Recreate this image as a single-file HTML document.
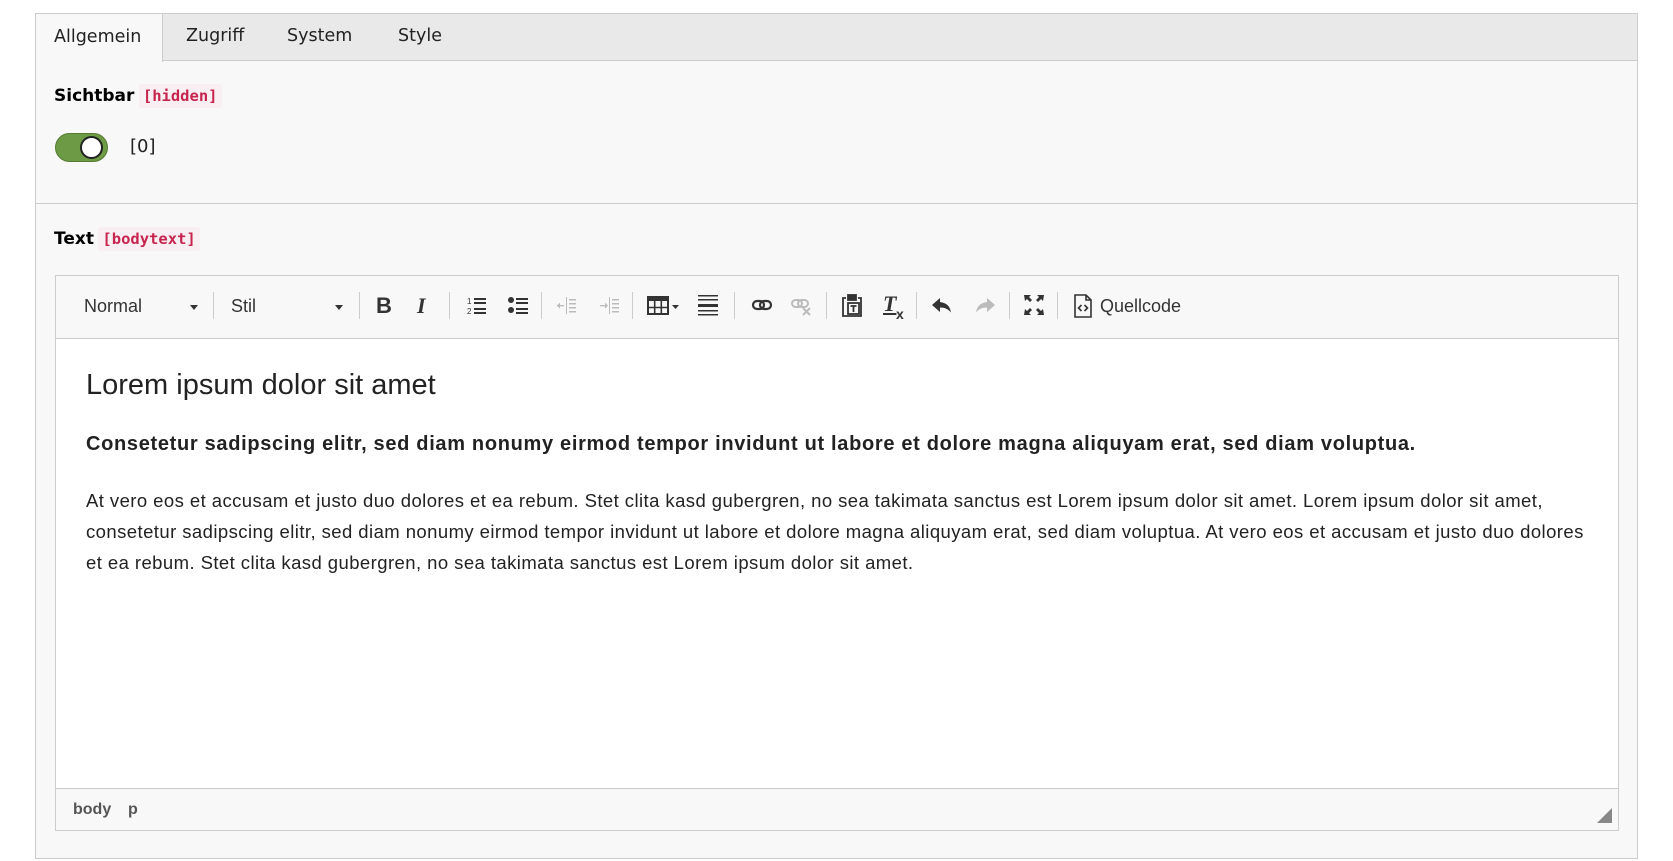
<!DOCTYPE html>
<html><head><meta charset="utf-8"><style>
*{box-sizing:border-box;margin:0;padding:0}
body{width:1673px;height:861px;background:#fff;font-family:"Liberation Sans",Arial,sans-serif;color:#222;position:relative;overflow:hidden}
.abs{position:absolute}
.panel{left:35px;top:13px;width:1603px;height:846px;background:#f8f8f8;border:1px solid #ccc}
.tabbar{left:35px;top:13px;width:1603px;height:48px;background:#e9e9e9;border:1px solid #ccc}
.tab{position:absolute;top:13px;height:48px;line-height:46px;font-size:17.5px;color:#222;font-family:"DejaVu Sans",sans-serif}
.tab.active{background:#f8f8f8;border:1px solid #ccc;border-bottom:none;left:35px;width:128px;padding-left:18px;height:49px}
.lbl{font-weight:bold;font-size:17px;color:#000;font-family:"DejaVu Sans",sans-serif}
.code{font-family:"DejaVu Sans Mono",monospace;font-size:15.5px;color:#c7254e;background:#f9eef1;padding:3px 4px;font-weight:bold;border-radius:3px}
.sep{position:absolute;top:292px;width:1px;height:27px;background:#ccc}
.ic{position:absolute;top:294px}
.editor{left:55px;top:275px;width:1564px;height:556px;border:1px solid #ccc;background:#fff}
.tb{left:56px;top:276px;width:1562px;height:63px;background:#f8f8f8;border-bottom:1px solid #ccc}
.status{left:56px;top:788px;width:1562px;height:42px;background:#f8f8f8;border-top:1px solid #ccc}
.txt{font-size:18px;color:#333;position:absolute;top:294px;line-height:24px}
</style></head><body>
<div class="abs panel"></div>
<div class="abs tabbar"></div>
<div class="tab active">Allgemein</div>
<div class="tab" style="left:186px">Zugriff</div>
<div class="tab" style="left:287px">System</div>
<div class="tab" style="left:398px">Style</div>

<div class="abs" style="left:54px;top:86px;white-space:nowrap"><span class="lbl">Sichtbar</span> <span class="code">[hidden]</span></div>
<div class="abs" style="left:55px;top:133px;width:53px;height:29px;border-radius:15px;background:#6d9a44;border:1px solid #567c33"></div>
<div class="abs" style="left:80px;top:136px;width:23px;height:23px;border-radius:50%;background:#fff;border:2px solid #222"></div>
<div class="abs" style="left:130px;top:136px;font-size:18px;color:#222;font-family:'DejaVu Sans',sans-serif">[0]</div>
<div class="abs" style="left:35px;top:203px;width:1603px;height:1px;background:#ccc"></div>

<div class="abs" style="left:54px;top:229px;white-space:nowrap"><span class="lbl">Text</span> <span class="code">[bodytext]</span></div>

<div class="abs editor"></div>
<div class="abs tb"></div>
<div class="txt" style="left:84px">Normal</div>
<div class="abs" style="left:190px;top:305px;border:4px solid transparent;border-top:5px solid #333"></div>
<div class="sep" style="left:213px"></div>
<div class="txt" style="left:231px">Stil</div>
<div class="abs" style="left:335px;top:305px;border:4px solid transparent;border-top:5px solid #333"></div>
<div class="sep" style="left:359px"></div>
<div class="ic" style="left:376px;font-weight:bold;font-size:22px;color:#333;top:293px">B</div>
<div class="ic" style="left:417px;font-weight:bold;font-style:italic;font-size:22px;color:#333;top:293px;font-family:'Liberation Serif',serif">I</div>
<div class="sep" style="left:449px"></div>
<svg class="ic" style="left:466px" width="22" height="22" viewBox="0 0 22 22" fill="#333"><text x="1" y="10" font-size="8" font-family="Liberation Sans">1</text><text x="1" y="20" font-size="8" font-family="Liberation Sans">2</text><rect x="8" y="4" width="12" height="2"/><rect x="8" y="8" width="12" height="2"/><rect x="8" y="14" width="12" height="2"/><rect x="8" y="18" width="12" height="2"/></svg>
<svg class="ic" style="left:507px" width="22" height="22" viewBox="0 0 22 22" fill="#333"><circle cx="4" cy="6" r="3"/><circle cx="4" cy="16" r="3"/><rect x="9" y="4" width="12" height="2"/><rect x="9" y="8" width="12" height="2"/><rect x="9" y="14" width="12" height="2"/><rect x="9" y="18" width="12" height="2"/></svg>
<div class="sep" style="left:541px"></div>
<svg class="ic" style="left:555px" width="22" height="22" viewBox="0 0 22 22" fill="#bbb"><rect x="11" y="3" width="1" height="17"/><rect x="14" y="5" width="7" height="1.5"/><rect x="14" y="9" width="7" height="1.5"/><rect x="14" y="13" width="7" height="1.5"/><rect x="14" y="17" width="7" height="1.5"/><rect x="2" y="11" width="7" height="1.3"/><path d="M2 11.6l3-3v6z"/></svg>
<svg class="ic" style="left:598px" width="22" height="22" viewBox="0 0 22 22" fill="#bbb"><rect x="11" y="3" width="1" height="17"/><rect x="14" y="5" width="7" height="1.5"/><rect x="14" y="9" width="7" height="1.5"/><rect x="14" y="13" width="7" height="1.5"/><rect x="14" y="17" width="7" height="1.5"/><rect x="2" y="11" width="7" height="1.3"/><path d="M10 11.6l-3-3v6z"/></svg>
<div class="sep" style="left:632px"></div>
<svg class="ic" style="left:646px" width="36" height="22" viewBox="0 0 36 22"><rect x="2" y="3" width="20" height="17" fill="none" stroke="#333" stroke-width="2"/><rect x="2" y="3" width="20" height="4" fill="#333"/><path d="M2 13.5h20M8.7 3v17M15.3 3v17" stroke="#333" stroke-width="1.6"/><path d="M26 11h7l-3.5 4z" fill="#333"/></svg>
<svg class="ic" style="left:697px" width="22" height="24" viewBox="0 0 22 24" fill="#333"><rect x="1" y="1" width="20" height="1.5"/><rect x="1" y="5" width="20" height="1.5"/><rect x="1" y="10" width="20" height="3"/><rect x="1" y="16" width="20" height="1.5"/><rect x="1" y="20" width="20" height="1.5"/></svg>
<div class="sep" style="left:734px"></div>
<svg class="ic" style="left:751px" width="22" height="22" viewBox="0 0 22 22" fill="none" stroke="#333" stroke-width="2.2"><rect x="2" y="7" width="11" height="8" rx="4"/><rect x="9" y="7" width="11" height="8" rx="4"/></svg>
<svg class="ic" style="left:790px" width="24" height="24" viewBox="0 0 24 24" fill="none" stroke="#bbb" stroke-width="2"><rect x="2" y="6" width="10" height="7" rx="3.5"/><rect x="8" y="6" width="10" height="7" rx="3.5"/><path d="M13 14l7 7M20 14l-7 7"/></svg>
<div class="sep" style="left:826px"></div>
<svg class="ic" style="left:841px" width="22" height="24" viewBox="0 0 22 24" fill="none" stroke="#333" stroke-width="1.8"><path d="M5 4H2v18h18V4h-3"/><rect x="7" y="1" width="8" height="5" fill="#333"/><rect x="7" y="9" width="11" height="11"/><path d="M9.5 12h6M12.5 12v6"/></svg>
<div class="ic" style="left:883px;font-family:'Liberation Serif',serif;font-weight:bold;font-style:italic;font-size:22px;color:#333;top:291px;text-decoration:underline">T</div>
<div class="ic" style="left:896px;font-size:14px;font-weight:bold;color:#333;top:306px">x</div>
<div class="sep" style="left:916px"></div>
<svg class="ic" style="left:931px" width="22" height="22" viewBox="0 0 22 22" fill="#333"><path d="M9 4L1 11l8 7v-4.5c5 0 8 1.5 11 5-1-6-4-9.5-11-10.5z"/></svg>
<svg class="ic" style="left:974px" width="22" height="22" viewBox="0 0 22 22" fill="#bbb"><path d="M13 4l8 7-8 7v-4.5c-5 0-8 1.5-11 5 1-6 4-9.5 11-10.5z"/></svg>
<div class="sep" style="left:1009px"></div>
<svg class="ic" style="left:1023px" width="22" height="22" viewBox="0 0 22 22" fill="#333"><path d="M1 1h7L6 3l3 3-2 2-3-3-2 2zM21 1h-7l2 2-3 3 2 2 3-3 2 2zM1 21h7l-2-2 3-3-2-2-3 3-2-2zM21 21h-7l2-2-3-3 2-2 3 3 2-2z"/></svg>
<div class="sep" style="left:1057px"></div>
<svg class="ic" style="left:1073px" width="20" height="24" viewBox="0 0 20 24" fill="none" stroke="#333" stroke-width="1.6"><path d="M2 1h11l5 5v17H2z"/><path d="M13 1v5h5"/><path d="M8.5 11l-3 3 3 3M11.5 11l3 3-3 3"/></svg>
<div class="txt" style="left:1100px">Quellcode</div>

<div class="abs" style="left:86px;top:369px;font-size:29px;color:#222;white-space:nowrap">Lorem ipsum dolor sit amet</div>
<div class="abs" style="left:86px;top:433px;font-size:20px;letter-spacing:0.68px;font-weight:bold;color:#222;white-space:nowrap">Consetetur sadipscing elitr, sed diam nonumy eirmod tempor invidunt ut labore et dolore magna aliquyam erat, sed diam voluptua.</div>
<div class="abs" style="left:86px;top:485px;font-size:18.5px;letter-spacing:0.43px;line-height:31px;color:#222;white-space:nowrap">At vero eos et accusam et justo duo dolores et ea rebum. Stet clita kasd gubergren, no sea takimata sanctus est Lorem ipsum dolor sit amet. Lorem ipsum dolor sit amet,<br>consetetur sadipscing elitr, sed diam nonumy eirmod tempor invidunt ut labore et dolore magna aliquyam erat, sed diam voluptua. At vero eos et accusam et justo duo dolores<br>et ea rebum. Stet clita kasd gubergren, no sea takimata sanctus est Lorem ipsum dolor sit amet.</div>

<div class="abs status"></div>
<div class="abs" style="left:73px;top:801px;font-size:16px;font-weight:bold;color:#555">body</div>
<div class="abs" style="left:128px;top:801px;font-size:16px;font-weight:bold;color:#555">p</div>
<div class="abs" style="left:1597px;top:808px;width:0;height:0;border-left:15px solid transparent;border-bottom:15px solid #888"></div>
</body></html>
